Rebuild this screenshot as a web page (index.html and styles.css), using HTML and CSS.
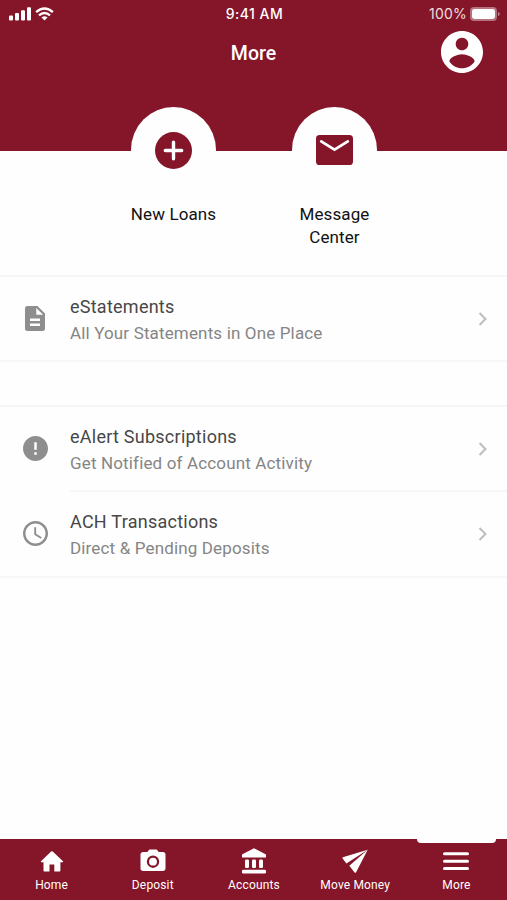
FILE: index.html
```html
<!DOCTYPE html>
<html lang="en">
<head>
  <meta charset="UTF-8">
  <meta name="viewport" content="width=device-width, initial-scale=1.0">
  <title>More</title>
  <link rel="stylesheet" href="styles.css">
</head>
<body>
  <!-- Header -->
  <header class="header">
    <div class="status-bar">
      <div class="status-left">
        <svg class="signal" viewBox="0 0 22 14">
          <rect x="0" y="8.5" width="4" height="5" rx="1"/>
          <rect x="6" y="6" width="4" height="7.5" rx="1"/>
          <rect x="12" y="3.3" width="4" height="10.2" rx="1"/>
          <rect x="18" y="0.3" width="4" height="13.2" rx="1"/>
        </svg>
        <svg class="wifi" viewBox="0 0 20 14">
          <path d="M1.2 5.1Q10-2.8 18.8 5.1M4.2 8.4Q10 3.3 15.8 8.4" fill="none" stroke="#fff" stroke-width="2.5"/>
          <path d="M6.8 10.6Q10 8 13.2 10.6L10 13.9Z"/>
        </svg>
      </div>
      <div class="status-time">9:41 AM</div>
      <div class="status-right">
        <span class="percent">100%</span>
        <svg class="battery" viewBox="0 0 30 14">
          <rect x="0" y="0" width="27" height="14" rx="4" fill-opacity=".4"/>
          <rect x="2" y="2" width="23" height="10" rx="2.4"/>
          <path d="M28 4.8q1.8.7 1.8 2.2T28 9.2z" fill-opacity=".45"/>
        </svg>
      </div>
    </div>
    <div class="title-bar">
      <h1>More</h1>
      <svg class="profile" viewBox="2 2 20 20">
        <path d="M12 2C6.48 2 2 6.48 2 12s4.48 10 10 10 10-4.48 10-10S17.52 2 12 2zm0 3.2c1.66 0 3 1.34 3 3s-1.34 3-3 3-3-1.34-3-3 1.34-3 3-3zm0 14.5c-2.5 0-4.71-1.28-6-3.22.03-1.99 4-3.38 6-3.38s5.97 1.39 6 3.38c-1.29 1.94-3.5 3.22-6 3.22z"/>
      </svg>
    </div>
  </header>

  <!-- Shortcuts -->
  <section class="shortcuts">
    <a class="shortcut">
      <span class="circle">
        <svg width="37" height="37" viewBox="0 0 37 37">
          <circle cx="18.5" cy="18.5" r="18.5"/>
          <path d="M18.5 10.3v16.4M10.3 18.5h16.4" stroke="#fff" stroke-width="3.4" stroke-linecap="round"/>
        </svg>
      </span>
      <span class="shortcut-label">New Loans</span>
    </a>
    <a class="shortcut">
      <span class="circle">
        <svg width="37" height="30" viewBox="0 0 37 30">
          <rect width="37" height="30" rx="3.6"/>
          <path d="M5.2 6.4l13.3 8.3 13.3-8.3" fill="none" stroke="#fff" stroke-width="2.8" stroke-linecap="round"/>
        </svg>
      </span>
      <span class="shortcut-label">Message<br>Center</span>
    </a>
  </section>

  <!-- Menu -->
  <main>
    <ul class="menu">
      <li class="row">
        <span class="row-icon">
          <svg width="20" height="25" viewBox="0 0 20 25">
            <path fill-rule="evenodd" d="M2.5 0H12.5L20 7.5V22.5Q20 25 17.5 25H2.5Q0 25 0 22.5V2.5Q0 0 2.5 0ZM11.3 1.9V8.7H18.1ZM5 12.5V15H15V12.5ZM5 17.5V20H15V17.5Z"/>
          </svg>
        </span>
        <div class="row-body">
          <div class="row-text">
            <div class="row-title">eStatements</div>
            <div class="row-sub">All Your Statements in One Place</div>
          </div>
          <svg class="chevron" viewBox="0 0 10 14"><path d="M1.5 1l6 6-6 6"/></svg>
        </div>
      </li>
    </ul>
    <ul class="menu">
      <li class="row">
        <span class="row-icon">
          <svg width="25" height="25" viewBox="2 2 20 20">
            <path d="M12 2C6.48 2 2 6.48 2 12s4.48 10 10 10 10-4.48 10-10S17.52 2 12 2zm1 15h-2v-2h2v2zm0-4h-2V7h2v6z"/>
          </svg>
        </span>
        <div class="row-body">
          <div class="row-text">
            <div class="row-title">eAlert Subscriptions</div>
            <div class="row-sub">Get Notified of Account Activity</div>
          </div>
          <svg class="chevron" viewBox="0 0 10 14"><path d="M1.5 1l6 6-6 6"/></svg>
        </div>
      </li>
      <li class="row">
        <span class="row-icon">
          <svg width="25" height="25" viewBox="2 2 20 20">
            <path d="M12 2C6.48 2 2 6.48 2 12s4.47 10 10 10 10-4.48 10-10S17.52 2 12 2zm0 18c-4.42 0-8-3.58-8-8s3.58-8 8-8 8 3.58 8 8-3.58 8-8 8zm.5-13H11v6l5.25 3.15.75-1.23-4.5-2.67z"/>
          </svg>
        </span>
        <div class="row-body">
          <div class="row-text">
            <div class="row-title">ACH Transactions</div>
            <div class="row-sub">Direct &amp; Pending Deposits</div>
          </div>
          <svg class="chevron" viewBox="0 0 10 14"><path d="M1.5 1l6 6-6 6"/></svg>
        </div>
      </li>
    </ul>
  </main>

  <!-- Tab bar -->
  <nav class="tabs">
    <a class="tab">
      <svg viewBox="0 0 26 26"><path d="M10.5 23.4v-7h4.8v7h5.2q.9 0 .9-.9v-8.2h2.4q.8-.4.2-1.1L13.7 3.5q-.8-.6-1.600 0L2 13.200q-.6.7.2 1.100h2.300v8.200q0 .9.9.9z"/></svg>
      <span>Home</span>
    </a>
    <a class="tab">
      <svg viewBox="0 0 26 26">
        <path fill-rule="evenodd" d="M8.7 2.3Q9 1.5 9.8 1.5h6.4q.8 0 1.2.8l1.2 1.8h4.2q2.7 0 2.7 2.7v13.5q0 2.7-2.7 2.7H3.2Q.5 23 .5 20.3V6.8q0-2.7 2.7-2.7h4.2zM13 7.5a6.2 6.2 0 1 0 0 12.4 6.2 6.2 0 0 0 0-12.4z"/>
        <circle cx="13" cy="13.7" r="3.9"/>
      </svg>
      <span>Deposit</span>
    </a>
    <a class="tab">
      <svg viewBox="0 0 26 26">
        <path d="M13 .3L24.6 6.2q.4.2.4.7v2.1q0 .6-.6.6H1.6Q1 9.6 1 9V6.9q0-.5.4-.7z"/>
        <rect x="4" y="11.6" width="4" height="8.4" rx="1.2"/>
        <rect x="11" y="11.6" width="4" height="8.4" rx="1.2"/>
        <rect x="18" y="11.6" width="4" height="8.4" rx="1.2"/>
        <rect x="1" y="21.8" width="24" height="3.6" rx="1.2"/>
      </svg>
      <span>Accounts</span>
    </a>
    <a class="tab">
      <svg viewBox="0 0 26 26"><path d="M25.7 1.7L.8 9.2q-.8.5-.2 1.2l3.8 5.2zM25.7 1.7L7.3 17.800l5.300 6.800q.9.600 1.500-.3z"/></svg>
      <span>Move Money</span>
    </a>
    <a class="tab active">
      <svg viewBox="0 0 26 26"><path d="M1.5 5.8h23M1.5 13.2h23M1.5 20.5h23" stroke="#fff" stroke-width="3" stroke-linecap="round"/></svg>
      <span>More</span>
    </a>
  </nav>
</body>
</html>
```
FILE: styles.css
```css
* {
  margin: 0;
  padding: 0;
  box-sizing: border-box;
}

body {
  height: 100vh;
  display: flex;
  flex-direction: column;
  background: #fefefe;
  font-family: Roboto, sans-serif;
  overflow: hidden;
}

svg {
  display: block;
  flex: none;
}

/* Header */
.header {
  height: 151px;
  flex: none;
  background: #851528;
  color: #fff;
}

.header svg {
  fill: #fff;
}

.status-bar {
  height: 27px;
  padding: 0 7px 0 9px;
  display: grid;
  grid-template-columns: 1fr auto 1fr;
  align-items: center;
  font-family: Inter, sans-serif;
  font-size: 14px;
}

.status-left {
  display: flex;
  gap: 4px;
}

.signal {
  width: 22px;
  height: 14px;
}

.wifi {
  width: 19px;
  height: 14px;
}

.status-time {
  font-weight: 500;
  font-size: 14px;
  letter-spacing: 0.5px;
}

.status-right {
  display: flex;
  justify-content: flex-end;
  align-items: center;
  gap: 3px;
}

.percent {
  letter-spacing: 0.2px;
  opacity: 0.85;
}

.battery {
  width: 30px;
  height: 14px;
}

.title-bar {
  height: 50px;
  padding: 0 24px;
  display: grid;
  grid-template-columns: 1fr auto 1fr;
  align-items: center;
}

.title-bar h1 {
  grid-column: 2;
  padding-top: 2px;
  font-size: 19.5px;
  font-weight: 500;
}

.profile {
  width: 42px;
  height: 42px;
  justify-self: end;
}

/* Shortcuts */
.shortcuts {
  height: 168px;
  margin-top: -44px;
  padding-left: 1px;
  flex: none;
  display: flex;
  justify-content: center;
  gap: 76px;
}

.shortcut {
  width: 85px;
  display: flex;
  flex-direction: column;
  align-items: center;
}

.circle {
  width: 85px;
  height: 86px;
  display: flex;
  justify-content: center;
  align-items: center;
  background: #fefefe;
  border-radius: 50%;
}

.circle svg {
  fill: #851528;
}

.shortcut-label {
  margin-top: 10px;
  font-size: 17px;
  line-height: 23px;
  letter-spacing: 0.1px;
  text-align: center;
  white-space: nowrap;
  color: #111;
}

/* Menu */
main {
  flex: 1;
}

.menu {
  list-style: none;
  border-top: 2px solid #f6f6f6;
  border-bottom: 2px solid #f6f6f6;
  margin-bottom: 43px;
}

.row {
  display: flex;
  align-items: center;
}

.row-icon {
  width: 70px;
  display: flex;
  justify-content: center;
}

.row-icon svg {
  fill: #8e8e8e;
}

.row-body {
  flex: 1;
  height: 83px;
  padding-right: 19px;
  display: flex;
  justify-content: space-between;
  align-items: center;
}

.row + .row .row-body {
  height: 86px;
  border-top: 2px solid #f6f6f6;
}

.row-text {
  padding-top: 3px;
}

.row + .row .row-text {
  padding-top: 1px;
}

.row-title {
  font-size: 18px;
  line-height: 26px;
  letter-spacing: 0.25px;
  color: #474747;
}

.row-sub {
  font-size: 17px;
  line-height: 26px;
  letter-spacing: 0.15px;
  color: #858585;
}

.chevron {
  width: 10px;
  height: 14px;
}

.chevron path {
  fill: none;
  stroke: #bdbdbd;
  stroke-width: 2;
}

/* Tab bar */
.tabs {
  height: 61px;
  flex: none;
  display: flex;
  padding-left: 1px;
  background: #851528;
  color: #fff;
}

.tab {
  flex: 1;
  position: relative;
  padding-top: 9px;
  display: flex;
  flex-direction: column;
  align-items: center;
  font-size: 12px;
  letter-spacing: 0.15px;
}

.tab svg {
  width: 26px;
  height: 26px;
  fill: #fff;
}

.tab span {
  margin-top: 4px;
  line-height: 14px;
}

/* Active marker */
.tab.active::before {
  content: "";
  position: absolute;
  top: 0;
  left: 11px;
  width: 79px;
  height: 4px;
  background: #fff;
  border-radius: 0 0 4px 4px;
}
```
